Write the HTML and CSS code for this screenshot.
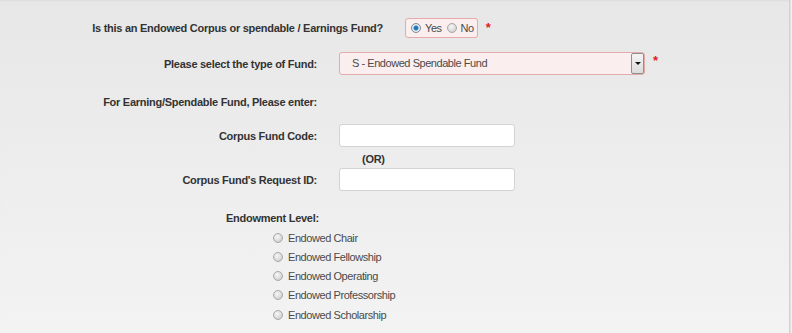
FILE: index.html
```html
<!DOCTYPE html>
<html>
<head>
<meta charset="utf-8">
<link rel="stylesheet" href="styles.css">
</head>
<body>
<div class="panel">
  <div class="row row-q">
    <div class="label label-wide">Is this an Endowed Corpus or spendable / Earnings Fund?</div>
    <div class="radio-box">
      <label class="opt"><input type="radio" name="yn" checked><span>Yes</span></label>
      <label class="opt"><input type="radio" name="yn"><span>No</span></label>
    </div>
    <span class="req req-q">*</span>
  </div>

  <div class="row row-select">
    <div class="label">Please select the type of Fund:</div>
    <div class="select">
      <span class="select-text">S - Endowed Spendable Fund</span>
      <span class="select-btn"><span class="arrow"></span></span>
    </div>
    <span class="req req-s">*</span>
  </div>

  <div class="row row-note">
    <div class="label">For Earning/Spendable Fund, Please enter:</div>
  </div>

  <div class="row row-code">
    <div class="label">Corpus Fund Code:</div>
    <input class="text-input" type="text">
  </div>

  <div class="or">(OR)</div>

  <div class="row row-id">
    <div class="label">Corpus Fund's Request ID:</div>
    <input class="text-input" type="text">
  </div>

  <div class="level-title">Endowment Level:</div>
  <div class="levels">
    <label class="level"><input type="radio" name="lvl"><span>Endowed Chair</span></label>
    <label class="level"><input type="radio" name="lvl"><span>Endowed Fellowship</span></label>
    <label class="level"><input type="radio" name="lvl"><span>Endowed Operating</span></label>
    <label class="level"><input type="radio" name="lvl"><span>Endowed Professorship</span></label>
    <label class="level"><input type="radio" name="lvl"><span>Endowed Scholarship</span></label>
  </div>
</div>
</body>
</html>
```

FILE: styles.css
```css
* { box-sizing: border-box; }

html, body {
  margin: 0;
  padding: 0;
  background: #f4f4f4;
}

body {
  font-family: "Liberation Sans", Arial, sans-serif;
  color: #333;
}

.panel {
  width: 790px;
  height: 333px;
  padding-top: 18px;
  background: linear-gradient(to bottom, #e7e7e7 0%, #f3f3f3 100%);
  border-right: 1px solid #d4d4d4;
  box-shadow: inset 0 2px 2px -1px #dcdcdc, 1px 0 1px #e0e0e0;
  overflow: hidden;
}

.row {
  display: flex;
  align-items: center;
}

.label {
  width: 317px;
  text-align: right;
  font-weight: bold;
  font-size: 11px;
  letter-spacing: -0.27px;
  color: #333;
  margin-right: 22px;
  white-space: nowrap;
}

.label-wide {
  width: 383px;
}

.row-q {
  height: 20px;
}

.radio-box {
  display: flex;
  align-items: center;
  height: 20px;
  padding: 0 3px 0 5px;
  background: #fbeeee;
  border: 1px solid #e7a9a9;
  border-radius: 3px;
}

.opt {
  display: flex;
  align-items: center;
  font-size: 11px;
  letter-spacing: -0.45px;
  color: #4a4a4a;
  margin-right: 5px;
}

.opt:last-child { margin-right: 0; }

.opt input[type="radio"] {
  margin-right: 4px;
}

input[type="radio"] {
  -webkit-appearance: none;
  appearance: none;
  width: 10px;
  height: 10px;
  margin: 0 5px 0 0;
  border-radius: 50%;
  border: 1px solid #a8a8a8;
  background: radial-gradient(circle at 40% 35%, #f6f6f6 0%, #dcdcdc 55%, #c2c2c2 100%);
  flex: none;
}

input[type="radio"]:checked {
  border-color: #7a8a99;
  background: radial-gradient(circle, #1f6aa6 0, #2a7fc0 2px, #e9eef2 3px, #d5d9dd 100%);
}

.req {
  color: #e21b1b;
  font-size: 13px;
  font-weight: bold;
  line-height: 1;
  align-self: flex-start;
}

.req-q {
  margin-left: 8px;
  margin-top: 3px;
}

.row-select {
  margin-top: 14px;
  height: 23px;
}

.select {
  display: flex;
  width: 306px;
  height: 23px;
  background: #fbeeee;
  border: 1px solid #e4abab;
  border-radius: 3px;
}

.select-text {
  flex: 1;
  padding-left: 12px;
  font-size: 11px;
  letter-spacing: -0.45px;
  color: #4a4a4a;
  line-height: 21px;
}

.select-btn {
  width: 13px;
  height: 21px;
  border: 1px solid #8f8f8f;
  border-radius: 2px;
  background: linear-gradient(to bottom, #f4f4f4 0%, #dcdcdc 100%);
  display: flex;
  align-items: center;
  justify-content: center;
}

.arrow {
  width: 0;
  height: 0;
  border-left: 3px solid transparent;
  border-right: 3px solid transparent;
  border-top: 3px solid #111;
}

.req-s {
  margin-left: 8px;
  margin-top: 2px;
}

.row-note {
  margin-top: 20px;
  height: 14px;
}

.row-code {
  margin-top: 15px;
}

.text-input {
  width: 176px;
  height: 23px;
  border: 1px solid #d3d3d3;
  border-radius: 3px;
  background: #fff;
  margin: 0;
  padding: 0 4px;
}

.or {
  margin-top: 5px;
  margin-left: 362px;
  height: 14px;
  line-height: 14px;
  font-size: 11px;
  letter-spacing: -0.27px;
  font-weight: bold;
  color: #333;
}

.row-id {
  margin-top: 2px;
}

.level-title {
  margin-top: 20px;
  margin-left: 226px;
  height: 14px;
  line-height: 14px;
  font-size: 11px;
  letter-spacing: -0.27px;
  font-weight: bold;
  color: #333;
}

.levels {
  margin-top: 3px;
  margin-left: 273px;
  display: flex;
  flex-direction: column;
}

.level {
  display: flex;
  align-items: center;
  height: 19.25px;
  font-size: 11px;
  letter-spacing: -0.43px;
  color: #4a4a4a;
}
```
